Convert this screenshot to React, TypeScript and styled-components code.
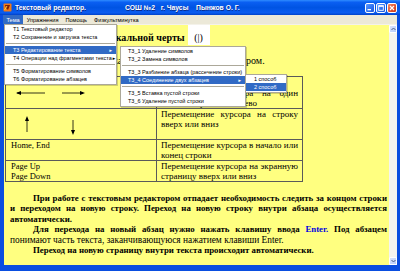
import React from "react"
import styled, { createGlobalStyle, css } from "styled-components"

const GlobalStyle = createGlobalStyle`
  html, body { margin: 0; padding: 0; background: #fff; }
  body { width: 400px; height: 271px; overflow: hidden; }
`

const Window = styled.div`
  position: relative;
  width: 400px;
  height: 271px;
  display: flex;
  flex-direction: column;
  background: #0a4ee0;
  font-family: "Liberation Sans", Arial, sans-serif;
  overflow: hidden;
`

const TitleBar = styled.div`
  height: 15px;
  flex: none;
  display: flex;
  align-items: center;
  padding: 0 3px;
  background: linear-gradient(180deg, #2f8cff 0%, #0a5ff2 15%, #0054e3 50%, #0a5cf0 85%, #0042c8 100%);
  color: #fff;
  font-weight: bold;
  font-size: 6.8px;
  text-shadow: 0.6px 0.6px 0 #0a2a8a;
  white-space: pre;
`

const Title = styled.span`
  margin-left: 3px;
`

const Author = styled.span`
  margin-left: 39px;
`

const Controls = styled.div`
  margin-left: auto;
  display: flex;
  gap: 1px;
`

const CtlButton = styled.div<{ $close?: boolean }>`
  width: 10px;
  height: 10px;
  box-sizing: border-box;
  border: 1px solid #fff;
  border-radius: 2px;
  display: flex;
  align-items: center;
  justify-content: center;
  background: ${p => p.$close
    ? "linear-gradient(135deg, #f08a6a, #e0502c 60%, #c63a1c)"
    : "linear-gradient(135deg, #5d9bff, #2a6ff0 60%, #1d55d8)"};
`

const MenuBar = styled.div`
  height: 9px;
  flex: none;
  margin: 0 3px;
  background: #ece9d8;
  display: flex;
  font-size: 5.6px;
  color: #000;
`

const MenuTitle = styled.div<{ $active?: boolean }>`
  padding: 0 3.5px;
  display: flex;
  align-items: center;
  ${p => p.$active && css`
    background: #316ac5;
    color: #fff;
  `}
`

const Client = styled.div`
  flex: 1;
  min-height: 0;
  display: flex;
  margin: 0 3px 6px 4px;
  border-top: 1px solid #f4f2ea;
`

const Doc = styled.div`
  flex: 1;
  background: #ffff80;
  overflow: hidden;
  font-family: "Liberation Serif", "Times New Roman", serif;
  color: #000;
`

const HeadRow = styled.div`
  height: 20px;
  display: flex;
  align-items: flex-end;
  padding-left: 21px;
  font-size: 10px;
  line-height: 10px;
`

const HeadText = styled.span`
  font-weight: bold;
  white-space: nowrap;
  padding-bottom: 2px;
`

const CursorBox = styled.span`
  align-self: stretch;
  margin-left: 3px;
  width: 22px;
  background: #fff;
  display: flex;
  align-items: flex-end;
  justify-content: center;
  padding-bottom: 2px;
`

const LeadLine = styled.div`
  margin-top: 10px;
  padding-left: 67px;
  font-size: 10px;
  line-height: 11px;
  white-space: nowrap;
`

const Table = styled.table`
  margin: 10px 0 0 1px;
  border-collapse: collapse;
  font-size: 9px;
  line-height: 10px;
`

const Cell = styled.td<{ $w: number; $h: number; $align?: string }>`
  width: ${p => p.$w}px;
  height: ${p => p.$h}px;
  box-sizing: border-box;
  border: 1px solid #5a5a5a;
  padding: 0 4px;
  vertical-align: ${p => p.$align ?? "top"};
  text-align: justify;
  text-align-last: left;
`

const KeyCell = styled(Cell)`
  padding: 0;
  text-align: left;
`

const KeyText = styled.div`
  padding: 0 5px;
  font-size: 8.5px;
`

const ArrowLabel = styled.div`
  margin-left: 58px;
  color: #1a1ad8;
  font-size: 7px;
  line-height: 8px;
  text-decoration: underline;
`

const Paras = styled.div`
  margin-top: 11px;
  padding: 0 2px 0 6px;
  font-size: 8.8px;
  line-height: 10.4px;
  font-weight: bold;
`

const Line = styled.span<{ $indent?: boolean; $justify?: boolean; $plain?: boolean }>`
  display: block;
  text-indent: ${p => (p.$indent ? "23px" : "0")};
  text-align: ${p => (p.$justify ? "justify" : "left")};
  text-align-last: ${p => (p.$justify ? "justify" : "left")};
  word-spacing: ${p => (p.$justify ? "-0.6px" : "0")};
  ${p => p.$plain && css`
    font-weight: normal;
    font-size: 9.4px;
  `}
`

const Key = styled.span`
  color: #0000e0;
`

const ScrollBar = styled.div`
  width: 8px;
  flex: none;
  background: #f5f4ef;
  display: flex;
  flex-direction: column;
  justify-content: space-between;
`

const ScrollBtn = styled.div`
  height: 8px;
  box-sizing: border-box;
  border: 1px solid #fff;
  border-radius: 1px;
  background: linear-gradient(135deg, #d6e2fd, #b9cdf9);
  display: flex;
  align-items: center;
  justify-content: center;
`

const Popup = styled.div<{ $x: number; $y: number; $w: number }>`
  position: absolute;
  left: ${p => p.$x}px;
  top: ${p => p.$y}px;
  width: ${p => p.$w}px;
  box-sizing: border-box;
  background: #fff;
  border: 1px solid #aca899;
  padding: 0 0 1px;
  font-size: 5.5px;
  color: #000;
  box-shadow: 1px 1px 0 rgba(0, 0, 0, 0.18);
`

const Item = styled.div<{ $active?: boolean; $pad?: number }>`
  height: 8px;
  display: flex;
  align-items: center;
  padding: 0 3px 0 ${p => p.$pad ?? 7}px;
  white-space: nowrap;
  ${p => p.$active && css`
    background: #316ac5;
    color: #fff;
  `}
`

const Sub = styled.span`
  margin-left: auto;
  font-size: 4.5px;
`

const Sep = styled.div`
  height: 5px;
  display: flex;
  align-items: center;
  padding: 0 1px;
  &::after {
    content: "";
    flex: 1;
    height: 1px;
    background: #aca899;
  }
`

const AppIcon = () => (
  <svg width="9" height="9" viewBox="0 0 9 9">
    <rect x="0.5" y="0.5" width="8" height="8" rx="1" fill="#f07a18" />
    <path d="M2 2 L7 2 L5 7 L3 5 Z" fill="#7a1e08" />
    <path d="M1.5 7 L4 3" stroke="#ffd23a" strokeWidth="1" />
  </svg>
)

const HArrows = () => (
  <svg width="150" height="16" viewBox="0 0 150 16">
    <line x1="11" y1="8" x2="39" y2="8" stroke="#000" strokeWidth="0.8" />
    <path d="M10 8 L15 6 L15 10 Z" fill="#000" />
    <line x1="56" y1="8" x2="77" y2="8" stroke="#000" strokeWidth="0.8" />
    <path d="M79 8 L74 6 L74 10 Z" fill="#000" />
  </svg>
)

const VArrows = () => (
  <svg width="150" height="28" viewBox="0 0 150 28">
    <line x1="21" y1="9" x2="21" y2="23" stroke="#000" strokeWidth="0.8" />
    <path d="M21 7 L19 12 L23 12 Z" fill="#000" />
    <line x1="67" y1="11" x2="67" y2="24" stroke="#000" strokeWidth="0.8" />
    <path d="M67 26 L65 21 L69 21 Z" fill="#000" />
  </svg>
)

const Chevron = ({ up }: { up?: boolean }) => (
  <svg width="5" height="4" viewBox="0 0 5 4">
    <path d={up ? "M0.5 3 L2.5 1 L4.5 3" : "M0.5 1 L2.5 3 L4.5 1"} stroke="#4d6185" strokeWidth="1" fill="none" />
  </svg>
)

export default function App() {
  return (
    <>
      <GlobalStyle />
      <Window>
        <TitleBar>
          <AppIcon />
          <Title>Текстовый редактор.</Title>
          <Author>{"СОШ №2   г. Чаусы    Пынжов О. Г."}</Author>
          <Controls>
            <CtlButton>
              <svg width="8" height="8" viewBox="0 0 8 8"><rect x="1.5" y="5" width="3.5" height="1.3" fill="#fff" /></svg>
            </CtlButton>
            <CtlButton>
              <svg width="8" height="8" viewBox="0 0 8 8"><rect x="1.7" y="1.7" width="4.6" height="4.6" fill="none" stroke="#fff" strokeWidth="0.9" /><rect x="1.5" y="1.5" width="5" height="1.3" fill="#fff" /></svg>
            </CtlButton>
            <CtlButton $close>
              <svg width="8" height="8" viewBox="0 0 8 8"><path d="M2 2 L6 6 M6 2 L2 6" stroke="#fff" strokeWidth="1.2" /></svg>
            </CtlButton>
          </Controls>
        </TitleBar>

        <MenuBar>
          <MenuTitle $active>Тема</MenuTitle>
          <MenuTitle>Упражнения</MenuTitle>
          <MenuTitle>Помощь</MenuTitle>
          <MenuTitle>Физкультминутка</MenuTitle>
        </MenuBar>

        <Client>
          <Doc>
            <HeadRow>
              <HeadText>Перемещение вертикальной черты</HeadText>
              <CursorBox>(|)</CursorBox>
            </HeadRow>
            <LeadLine>Эту вертикальную черту называют курсором.</LeadLine>

            <Table>
              <tbody>
                <tr>
                  <KeyCell $w={151} $h={32}>
                    <ArrowLabel>Стрелки</ArrowLabel>
                    <HArrows />
                  </KeyCell>
                  <Cell $w={146} $h={32} $align="bottom">
                    Перемещение курсора на один символ вправо или влево
                  </Cell>
                </tr>
                <tr>
                  <KeyCell $w={151} $h={30}>
                    <VArrows />
                  </KeyCell>
                  <Cell $w={146} $h={30}>Перемещение курсора на строку вверх или вниз</Cell>
                </tr>
                <tr>
                  <KeyCell $w={151} $h={20}>
                    <KeyText>Home, End</KeyText>
                  </KeyCell>
                  <Cell $w={146} $h={20}>Перемещение курсора в начало или конец строки</Cell>
                </tr>
                <tr>
                  <KeyCell $w={151} $h={21}>
                    <KeyText>Page Up<br />Page Down</KeyText>
                  </KeyCell>
                  <Cell $w={146} $h={21}>Перемещение курсора на экранную страницу вверх или вниз</Cell>
                </tr>
              </tbody>
            </Table>

            <Paras>
              <Line $indent $justify>При работе с текстовым редактором отпадает необходимость следить за концом строки</Line>
              <Line $justify>и переходом на новую строку. Переход на новую строку внутри абзаца осуществляется</Line>
              <Line>автоматически.</Line>
              <Line $indent $justify>Для перехода на новый абзац нужно нажать клавишу ввода <Key>Enter.</Key> Под абзацем</Line>
              <Line $plain>понимают часть текста, заканчивающуюся нажатием клавиши Enter.</Line>
              <Line $indent>Переход на новую страницу внутри текста происходит автоматически.</Line>
            </Paras>
          </Doc>
          <ScrollBar>
            <ScrollBtn><Chevron up /></ScrollBtn>
            <ScrollBtn><Chevron /></ScrollBtn>
          </ScrollBar>
        </Client>

        <Popup $x={4} $y={24} $w={113}>
          <Item $pad={8}>T1 Текстовый редактор</Item>
          <Item $pad={8}>T2 Сохранение и загрузка текста</Item>
          <Sep />
          <Item $pad={8} $active>T3 Редактирование текста<Sub>►</Sub></Item>
          <Item $pad={8}>T4 Операции над фрагментами текста<Sub>►</Sub></Item>
          <Sep />
          <Item $pad={8}>T5 Форматирование символов</Item>
          <Item $pad={8}>T6 Форматирование абзацев</Item>
        </Popup>

        <Popup $x={120} $y={46} $w={126}>
          <Item>T3_1 Удаление символов</Item>
          <Item>T3_2 Замена символов</Item>
          <Sep />
          <Item>T3_3 Разбиение абзаца (рассечение строки)</Item>
          <Item $active>T3_4 Соединение двух абзацев<Sub>►</Sub></Item>
          <Sep />
          <Item>T3_5 Вставка пустой строки</Item>
          <Item>T3_6 Удаление пустой строки</Item>
        </Popup>

        <Popup $x={245} $y={74} $w={42}>
          <Item $pad={8}>1 способ</Item>
          <Item $pad={8} $active>2 способ</Item>
        </Popup>
      </Window>
    </>
  )
}
